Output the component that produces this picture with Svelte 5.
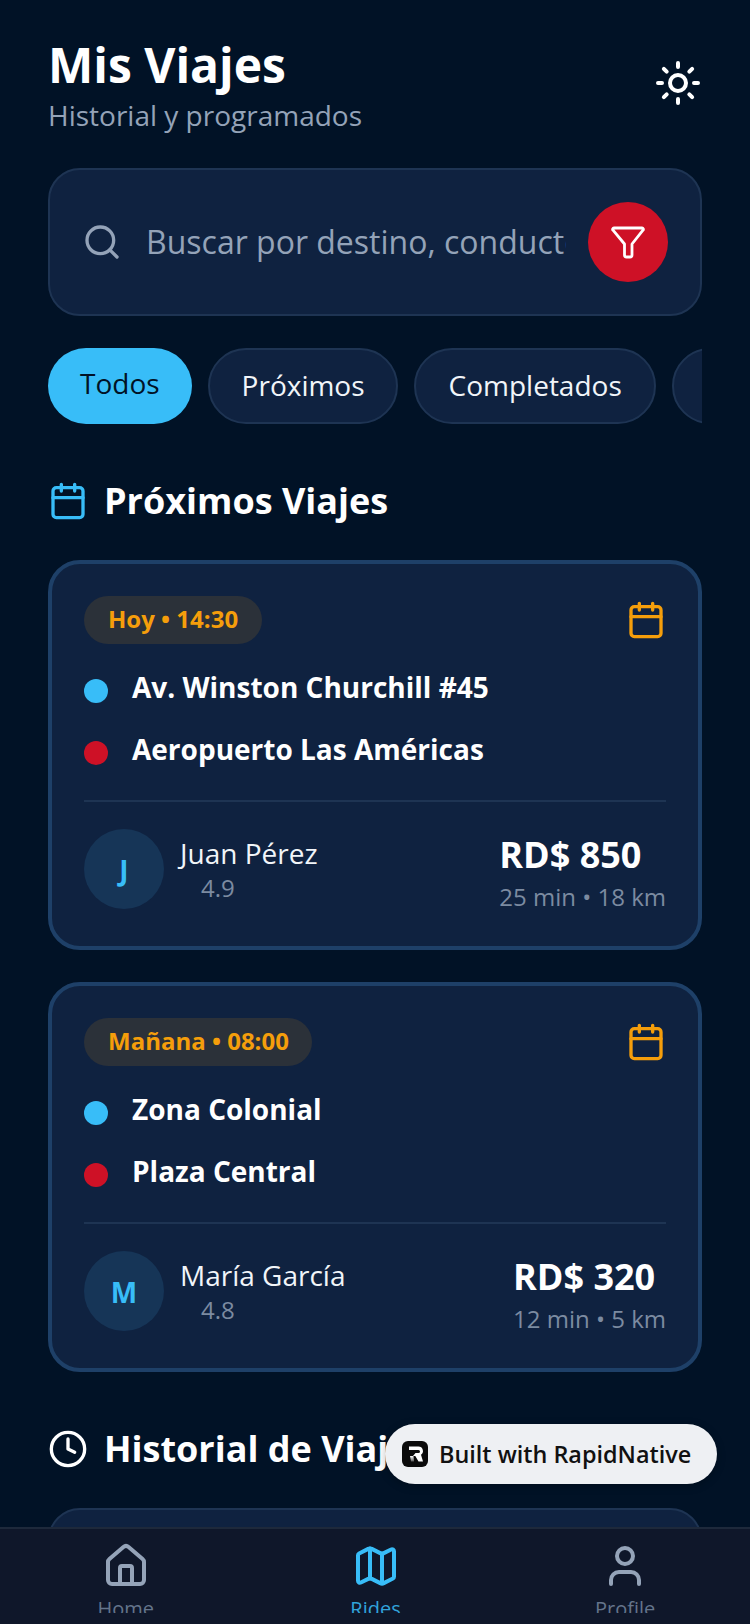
<script>
  const upcoming = [
    { when: 'Hoy • 14:30', from: 'Av. Winston Churchill #45', to: 'Aeropuerto Las Américas', initial: 'J', name: 'Juan Pérez', rating: '4.9', price: 'RD$ 850', meta: '25 min • 18 km' },
    { when: 'Mañana • 08:00', from: 'Zona Colonial', to: 'Plaza Central', initial: 'M', name: 'María García', rating: '4.8', price: 'RD$ 320', meta: '12 min • 5 km' }
  ];
</script>

<div class="screen">
  <main class="content">
    <header class="top">
      <div>
        <h1>Mis Viajes</h1>
        <p class="sub">Historial y programados</p>
      </div>
      <svg viewBox="0 0 24 24" width="48" height="48" fill="none" stroke="#fff" stroke-width="2" stroke-linecap="round" stroke-linejoin="round"><circle cx="12" cy="12" r="4"/><path d="M12 2v2M12 20v2M4.93 4.93l1.41 1.41M17.66 17.66l1.41 1.41M2 12h2M20 12h2M6.34 17.66l-1.41 1.41M19.07 4.93l-1.41 1.41"/></svg>
    </header>

    <div class="search">
      <svg viewBox="0 0 24 24" width="40" height="40" fill="none" stroke="#94a3b8" stroke-width="2" stroke-linecap="round" stroke-linejoin="round"><circle cx="11" cy="11" r="8"/><path d="m21 21-4.3-4.3"/></svg>
      <input placeholder="Buscar por destino, conductor o fecha" />
      <div class="filter">
        <svg viewBox="0 0 40 40" width="40" height="40" fill="none" stroke="#fff" stroke-width="2.800" stroke-linecap="round" stroke-linejoin="round"><path d="M6 6h28a1.300 1.300 0 0 1 1 2.200L24 22V33a2 2 0 0 1-2 2h-3.500a2 2 0 0 1-2-2V22L5 8.200A1.300 1.300 0 0 1 6 6z"/></svg>
      </div>
    </div>

    <div class="chips">
      <span class="chip active">Todos</span>
      <span class="chip">Próximos</span>
      <span class="chip">Completados</span>
      <span class="chip">Cancelados</span>
    </div>

    <div class="section-head">
      <svg viewBox="0 0 24 24" width="40" height="40" fill="none" stroke="#38bdf8" stroke-width="2" stroke-linecap="round" stroke-linejoin="round"><path d="M8 2v4M16 2v4M3 10h18"/><rect x="3" y="4" width="18" height="18" rx="2"/></svg>
      <h2>Próximos Viajes</h2>
    </div>

    {#each upcoming as trip}
      <article class="card">
        <div class="card-top">
          <span class="pill">{trip.when}</span>
          <svg viewBox="0 0 24 24" width="40" height="40" fill="none" stroke="#f59e0b" stroke-width="2" stroke-linecap="round" stroke-linejoin="round"><path d="M8 2v4M16 2v4M3 10h18"/><rect x="3" y="4" width="18" height="18" rx="2"/></svg>
        </div>
        <div class="route"><i class="dot blue"></i><span>{trip.from}</span></div>
        <div class="route"><i class="dot red"></i><span>{trip.to}</span></div>
        <div class="footer">
          <div class="driver">
            <div class="avatar">{trip.initial}</div>
            <div class="who">
              <div class="name">{trip.name}</div>
              <div class="rating">{trip.rating}</div>
            </div>
          </div>
          <div class="price">
            <div class="amount">{trip.price}</div>
            <div class="meta">{trip.meta}</div>
          </div>
        </div>
      </article>
    {/each}

    <div class="section-head history">
      <svg viewBox="0 0 24 24" width="40" height="40" fill="none" stroke="#fff" stroke-width="2" stroke-linecap="round" stroke-linejoin="round"><circle cx="12" cy="12" r="10"/><path d="M12 6v6l4 2"/></svg>
      <h2>Historial de Viajes</h2>
    </div>
    <article class="card plain"></article>
  </main>

  <nav class="tabs">
    <div class="tab">
      <svg viewBox="0 0 24 24" width="48" height="48" fill="none" stroke="#94a3b8" stroke-width="2" stroke-linecap="round" stroke-linejoin="round"><path d="M15 21v-8a1 1 0 0 0-1-1h-4a1 1 0 0 0-1 1v8"/><path d="M3 10a2 2 0 0 1 .709-1.528l7-5.999a2 2 0 0 1 2.582 0l7 5.999A2 2 0 0 1 21 10v9a2 2 0 0 1-2 2H5a2 2 0 0 1-2-2z"/></svg>
      <div class="label">Home</div>
    </div>
    <div class="tab on">
      <svg viewBox="0 0 24 24" width="48" height="48" fill="none" stroke="#38bdf8" stroke-width="2" stroke-linecap="round" stroke-linejoin="round"><path d="M14.106 5.553a2 2 0 0 0 1.788 0l3.659-1.830A1 1 0 0 1 21 4.619v12.764a1 1 0 0 1-.553.894l-4.553 2.277a2 2 0 0 1-1.788 0l-4.212-2.106a2 2 0 0 0-1.788 0l-3.659 1.830A1 1 0 0 1 3 19.381V6.618a1 1 0 0 1 .553-.894l4.553-2.277a2 2 0 0 1 1.788 0z"/><path d="M15 5.764v15M9 3.236v15"/></svg>
      <div class="label">Rides</div>
    </div>
    <div class="tab">
      <svg viewBox="0 0 24 24" width="48" height="48" fill="none" stroke="#94a3b8" stroke-width="2" stroke-linecap="round" stroke-linejoin="round"><path d="M19 21v-2a4 4 0 0 0-4-4H9a4 4 0 0 0-4 4v2"/><circle cx="12" cy="7" r="4"/></svg>
      <div class="label">Profile</div>
    </div>
  </nav>

  <div class="built">
    <svg viewBox="0 0 26 26" width="26" height="26">
      <defs><linearGradient id="stem" x1="0" y1="0" x2="0" y2="1"><stop offset="0" stop-color="#fff"/><stop offset="1" stop-color="#555"/></linearGradient></defs>
      <rect width="26" height="26" rx="6" fill="#0b0b0b"/>
      <path d="M7 5.500h9.500a4.500 4.500 0 0 1 2.500 8.200L21 20.500h-4.500l-3.200-5.500H11l2.500-3h3a1.500 1.500 0 0 0 0-3H7z" fill="#fff"/>
      <path d="M8 15h3.500l.5 5.500H9z" fill="url(#stem)"/>
    </svg>
    <span>Built with RapidNative</span>
  </div>
</div>

<style>
  :global(body) { margin: 0; background: #011226; }
  .screen {
    width: 750px;
    height: 1624px;
    display: flex;
    flex-direction: column;
    overflow: hidden;
    position: relative;
    background: #011226;
    font-family: "Open Sans", sans-serif;
    color: #fff;
  }
  .content { flex: 1; min-height: 0; overflow: hidden; padding: 32px 48px 0; }
  .top { display: flex; justify-content: space-between; align-items: center; }
  h1 { margin: 0; font-size: 48px; line-height: 66px; font-weight: 700; }
  .sub { margin: -2px 0 0; font-size: 28px; line-height: 38px; color: #94a3b8; }
  .search {
    box-sizing: border-box;
    margin-top: 34px;
    height: 148px;
    display: flex;
    align-items: center;
    padding: 0 32px 0 32px;
    gap: 24px;
    background: #0f2240;
    border: 2px solid #1e3453;
    border-radius: 32px;
  }
  .search input {
    flex: 1;
    min-width: 0;
    border: 0;
    outline: 0;
    padding: 0 0 2px;
    margin-right: -2px;
    background: transparent;
    font: 400 32px "Open Sans", sans-serif;
    color: #fff;
  }
  .search input::placeholder { color: #94a3b8; opacity: 1; }
  .filter {
    flex: none;
    width: 80px;
    height: 80px;
    border-radius: 50%;
    background: #ce1126;
    display: flex;
    align-items: center;
    justify-content: center;
  }
  .chips { display: flex; gap: 16px; margin-top: 32px; overflow: hidden; }
  .chip {
    flex: none;
    box-sizing: border-box;
    height: 76px;
    padding: 0 32px 2px;
    display: flex;
    align-items: center;
    border: 2px solid #1e3453;
    border-radius: 38px;
    background: #0f2240;
    font-size: 28px;
    color: #f1f5f9;
  }
  .chip:nth-child(2) { padding-right: 31px; }
  .chip:nth-child(3) { padding-left: 33px; }
  .chip.active { background: #38bdf8; border: 0; color: #011226; padding-bottom: 6px; }
  .section-head { display: flex; align-items: center; gap: 16px; margin-top: 52px; margin-bottom: 35px; height: 49px; }
  h2 { margin: 0; font-size: 36px; line-height: 49px; font-weight: 700; white-space: nowrap; }
  .card {
    box-sizing: border-box;
    height: 390px;
    margin-bottom: 32px;
    padding: 32px;
    background: #0f2240;
    border: 4px solid #1e4068;
    border-radius: 32px;
  }
  .card-top { display: flex; justify-content: space-between; align-items: center; margin-bottom: 24px; }
  .pill {
    box-sizing: border-box;
    height: 48px;
    padding: 0 23.500px 3px 24px;
    display: flex;
    align-items: center;
    border-radius: 24px;
    background: #2b3139;
    color: #f59e0b;
    font-size: 24px;
    font-weight: 700;
  }
  .route { display: flex; align-items: center; gap: 24px; height: 38px; margin-bottom: 24px; font-size: 28px; font-weight: 700; }
  .dot { width: 24px; height: 24px; border-radius: 50%; flex: none; margin-top: 8px; }
  .dot.blue { background: #38bdf8; }
  .dot.red { background: #ce1126; }
  .footer {
    display: flex;
    justify-content: space-between;
    align-items: center;
    margin-top: 32px;
    padding-top: 25px;
    border-top: 2px solid #1e3453;
  }
  .driver { display: flex; align-items: center; gap: 16px; }
  .avatar {
    box-sizing: border-box;
    width: 80px;
    height: 80px;
    margin-bottom: 2px;
    padding-top: 1px;
    border-radius: 50%;
    background: #163557;
    color: #38bdf8;
    font-size: 28px;
    font-weight: 700;
    display: flex;
    align-items: center;
    justify-content: center;
  }
  .who { padding-bottom: 2px; }
  .name { font-size: 28px; line-height: 38px; color: #f1f5f9; }
  .rating { font-size: 24px; line-height: 33px; margin-top: -1px; color: #7c8ba1; padding-left: 21px; }
  .price { text-align: left; margin-top: 3px; }
  .amount { font-size: 36px; line-height: 49px; font-weight: 700; }
  .meta { font-size: 24px; line-height: 33px; margin-top: 1px; color: #7c8ba1; }
  .plain { border-width: 2px; border-color: #1e3453; }
  .tabs {
    flex: none;
    box-sizing: border-box;
    height: 97px;
    display: flex;
    padding-left: 1px;
    background: #0f172a;
    border-top: 2px solid #1e293b;
    overflow: hidden;
  }
  .tab { flex: 1; display: flex; flex-direction: column; align-items: center; padding-top: 13px; color: #64748b; }
  .tab.on { color: #38bdf8; }
  .tab.on .label { opacity: 0.85; }
  .label { font-size: 20px; line-height: 28px; height: 18px; margin-top: 5px; overflow: hidden; }
  .built {
    position: absolute;
    left: 385px;
    top: 1424px;
    box-sizing: border-box;
    width: 332px;
    height: 60px;
    display: flex;
    align-items: center;
    gap: 11px;
    padding-left: 17px;
    border-radius: 30px;
    background: #eef0f3;
    box-shadow: 0 2px 8px rgba(0, 0, 0, 0.25);
    color: #111;
    font-size: 23.400px;
    font-weight: 600;
    white-space: nowrap;
  }
</style>
